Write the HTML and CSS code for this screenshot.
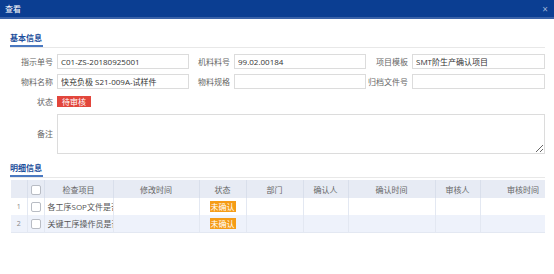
FILE: index.html
```html
<!DOCTYPE html>
<html>
<head>
  <title>查看</title>
  <link rel="stylesheet" href="styles.css">
</head>
<body>

<div class="dialog-head">
  <span class="dialog-title">查看</span>
  <span class="dialog-close">×</span>
</div>

<div class="section"><span class="section-title">基本信息</span></div>

<div class="form">
  <label>指示单号</label><input class="field" value="C01-ZS-20180925001">
  <label>机料料号</label><input class="field" value="99.02.00184">
  <label>项目模板</label><input class="field" value="SMT阶生产确认项目">

  <label>物料名称</label><input class="field" value="快充负极 S21-009A-试样件">
  <label>物料规格</label><input class="field" value="">
  <label>归档文件号</label><input class="field" value="">

  <label>状态</label>
  <div class="status-cell"><span class="tag tag-red">待审核</span></div>

  <label class="memo-label">备注</label><textarea class="memo"></textarea>
</div>

<div class="section section-detail"><span class="section-title">明细信息</span></div>

<div class="grid-wrap">
  <table class="grid">
    <colgroup>
      <col style="width:16px"><col style="width:17px"><col style="width:69px"><col style="width:86px">
      <col style="width:47px"><col style="width:57px"><col style="width:45px"><col style="width:87px">
      <col style="width:45px"><col style="width:86px">
    </colgroup>
    <thead>
      <tr>
        <th></th><th><span class="box"></span></th><th>检查项目</th><th>修改时间</th><th>状态</th>
        <th>部门</th><th>确认人</th><th>确认时间</th><th>审核人</th><th>审核时间</th>
      </tr>
    </thead>
    <tbody id="rows"></tbody>
  </table>
</div>

<script>
  const items = ["各工序SOP文件是否齐全", "关键工序操作员是否为上岗"];

  document.getElementById("rows").innerHTML = items.map((name, i) => `
    <tr>
      <td class="idx">${i + 1}</td>
      <td><span class="box"></span></td>
      <td class="name">${name}</td>
      <td></td>
      <td><span class="tag tag-orange">未确认</span></td>
      <td></td><td></td><td></td><td></td><td></td>
    </tr>
  `).join("");
</script>

</body>
</html>
```

FILE: styles.css
```css
body { margin: 0; background: #fff; font-family: "Open Sans", "Noto Sans CJK SC", sans-serif; font-size: 8px; color: #555; width: 554px; }

.dialog-head { height: 17px; background: #0b3e92; border-bottom: 2px solid #3a62a8; display: flex; align-items: center; justify-content: space-between; padding: 0 6px 0 5px; color: #fff; }
.dialog-title { font-size: 8px; }
.dialog-close { font-size: 10px; color: #9fb3d6; }

.section { margin: 11px 9px 0 10px; border-bottom: 1px solid #e8e8e8; height: 17px; display: flex; align-items: flex-start; }
.section-title { color: #1d4f9c; font-weight: bold; font-size: 8px; line-height: 15px; border-bottom: 2px solid #4a78c0; padding-right: 1px; white-space: nowrap; }
.section-detail { margin-top: 6px; }

.form { display: grid; grid-template-columns: 47px 132px 45px 132px 46px 133px; row-gap: 5px; margin: 6px 0 0 10px; }
.form label { text-align: right; padding-right: 4px; line-height: 15px; color: #666; white-space: nowrap; }
.field { height: 15px; box-sizing: border-box; border: 1px solid #dcdcdc; padding: 0 3px; font: inherit; font-size: 8px; color: #333; outline: none; }
.status-cell { grid-column: span 5; display: flex; align-items: center; height: 15px; }
.memo-label { line-height: 40px !important; }
.memo { grid-column: span 5; height: 40px; box-sizing: border-box; border: 1px solid #dcdcdc; font: inherit; margin: 0; }

.tag { display: inline-block; height: 11px; line-height: 11px; color: #fff; font-size: 8px; text-align: center; }
.tag-red { background: #e2463c; width: 34px; }
.tag-orange { background: #f59c16; width: 26px; }

.grid-wrap { margin: 2px 9px 0 11px; overflow: hidden; border-bottom: 1px solid #e3e8f2; }
.grid { border-collapse: collapse; table-layout: fixed; width: 555px; }
.grid th { height: 18px; background: #e7ebf4; color: #666; font-weight: normal; border-right: 1px solid #d9dfeb; padding: 0; text-align: center; }
.grid td { height: 17px; border-right: 1px solid #e3e8f2; padding: 0; text-align: center; white-space: nowrap; overflow: hidden; }
.grid tbody tr:nth-child(2) td { background: #eef2fb; }
.grid td.name { text-align: left; padding-left: 3px; color: #555; }
.grid td.idx { color: #888; font-size: 7px; }
.box { display: inline-block; width: 8px; height: 8px; border: 1px solid #b8bcc4; border-radius: 2px; background: #fff; vertical-align: middle; }
```
